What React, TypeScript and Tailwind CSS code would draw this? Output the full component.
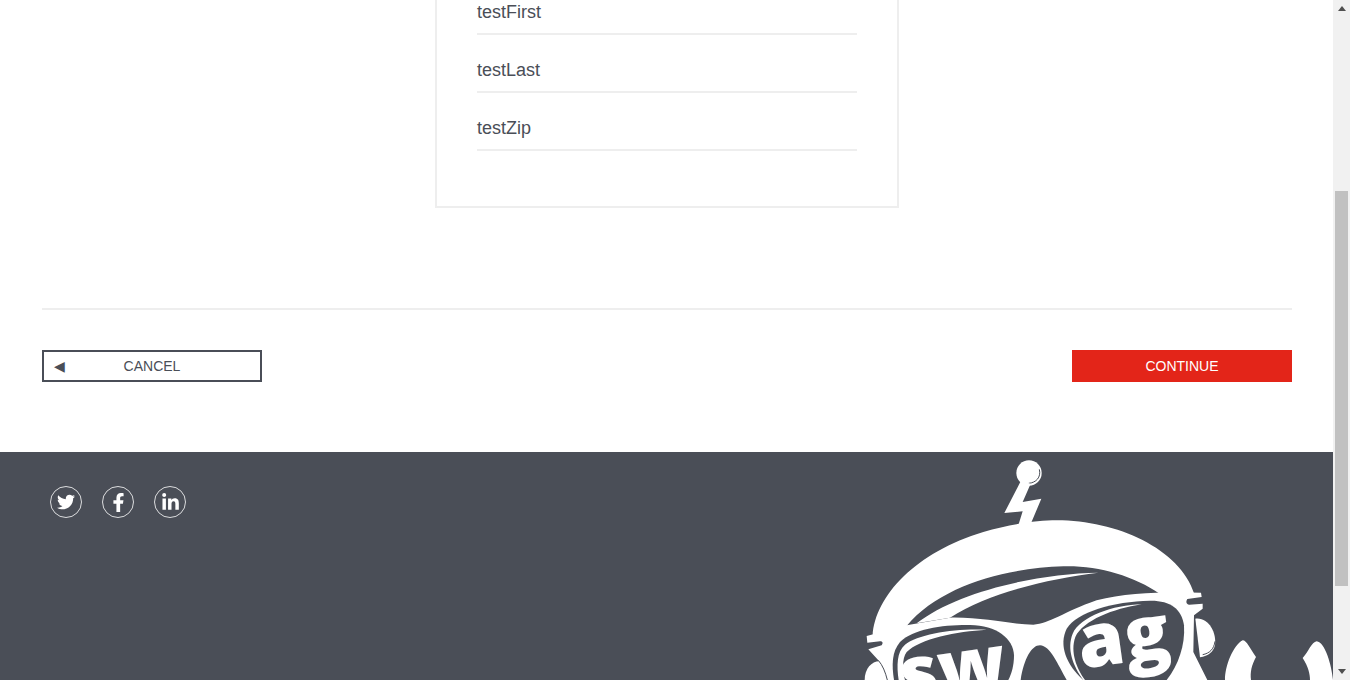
import { FaFacebookF, FaLinkedinIn, FaTwitter } from "react-icons/fa";

const rows = ["testFirst", "testLast", "testZip"];
const socials = [
  { key: "twitter", icon: <FaTwitter className="w-[18px] h-[18px]" /> },
  { key: "facebook", icon: <FaFacebookF className="w-[19px] h-[19px]" /> },
  { key: "linkedin", icon: <FaLinkedinIn className="w-[19px] h-[19px]" /> },
];

// Mascot, coordinates are 3x the footer pixels
function Mascot() {
  const dark = "#4a4e57";
  return (
    <svg viewBox="0 0 1449 684" className="w-[483px] h-[228px] shrink-0">
      {/* antenna */}
      <circle cx="537" cy="63" r="38" fill="#fff" />
      <path d="M568 52C574 76 558 92 536 94" fill="none" stroke={dark} strokeWidth="3" />
      <path d="M512 88L463 183L518 178L505 220L543 214L574 140L518 150L542 95Z" fill="#fff" />
      {/* dome */}
      <path d="M68 552C75 430 200 300 400 240C480 216 560 205 620 205C800 205 990 290 1033 426L930 426C850 370 740 340 640 343C470 348 270 400 170 522Z" fill="#fff" />
      <path d="M745 362C560 365 320 420 200 514L300 497C420 420 600 380 745 362Z" fill="#fff" />
      {/* ears and hands */}
      <path d="M1036 500C1075 495 1100 540 1095 580C1090 600 1075 612 1050 616Z" fill="#fff" />
      <path d="M1095 568C1092 592 1078 604 1058 608" fill="none" stroke={dark} strokeWidth="3" />
      <path d="M44 684C44 650 65 628 88 628L120 684Z" fill="#fff" />
      <path d="M1178 565C1190 565 1200 590 1218 615C1205 640 1200 660 1203 684L1125 684C1125 640 1150 580 1178 565Z" fill="#fff" />
      <path d="M1400 568C1385 570 1375 600 1358 618C1375 645 1380 665 1380 684L1449 684C1445 640 1425 570 1400 568Z" fill="#fff" />
      {/* glasses frame */}
      <path d="M50 552L170 520L300 497C400 495 480 517 550 518C600 515 640 480 740 445C830 420 950 420 1053 422L1055 435L1012 441C1006 450 1010 458 1018 458L1058 455L1058 470L1032 490L1030 600L1072 684L105 684L85 625L55 592L95 580C100 572 98 568 90 568L52 572Z" fill="#fff" />
      <path d="M85 625C98 640 106 660 112 684" fill="none" stroke={dark} strokeWidth="3" />
      <path d="M512 684C522 620 545 580 570 580C600 580 625 640 650 684Z" fill={dark} />
      {/* right lens */}
      <path d="M700 684C650 640 625 580 650 530C680 480 790 448 900 446C960 445 995 470 1002 520C1006 580 985 640 950 684Z" fill={dark} />
      <path d="M700 684C668 640 650 590 668 545C690 495 790 458 875 457C790 470 700 505 676 555C660 600 680 650 705 684Z" fill="#fff" />
      {/* left lens */}
      <path d="M132 684C125 640 125 600 150 570C190 530 280 518 360 519C440 520 490 560 492 610C492 640 485 665 475 684Z" fill={dark} />
      <path d="M146 684C140 640 140 600 165 578C205 545 320 528 410 533C320 538 210 560 170 600C155 620 158 660 165 684Z" fill="#fff" />
      {/* real text in the lenses */}
      <text x="694" y="650" transform="rotate(-8 694 650)" fill="#fff" className="font-['Open_Sans',sans-serif] font-extrabold text-[224px]">ag</text>
      <text x="160" y="748" transform="rotate(-8 160 748)" fill="#fff" className="font-['Open_Sans',sans-serif] font-extrabold text-[224px]">sw</text>
    </svg>
  );
}

function Scrollbar() {
  return (
    <div className="w-[17px] h-[680px] shrink-0 bg-[#f1f1f1] flex flex-col items-center">
      <div className="h-[17px] w-full flex items-center justify-center">
        <svg viewBox="0 0 8 5" className="w-2 h-[5px]"><path d="M4 0L8 5H0Z" fill="#505050" /></svg>
      </div>
      <div className="w-[13px] h-[395px] mt-[174px] bg-[#c1c1c1]" />
      <div className="h-[17px] w-full flex items-center justify-center mt-[77px]">
        <svg viewBox="0 0 8 5" className="w-2 h-[5px]"><path d="M0 0H8L4 5Z" fill="#505050" /></svg>
      </div>
    </div>
  );
}

export default function App() {
  return (
    <div className="flex h-[680px] w-[1350px] overflow-hidden bg-white font-['Liberation_Sans',Arial,sans-serif] text-[#4a4e57]">
      <div className="w-[1333px] shrink-0 flex flex-col">
        <div className="h-[452px] shrink-0 pl-[42px] pr-[41px]">
          <div className="h-[309px] flex justify-center">
            <div className="w-[464px] h-[208px] border-2 border-t-0 border-[#eeeeee] px-[40px]">
              {rows.map((r, i) => (
                <div
                  key={r}
                  className={`flex items-center border-b-2 border-[#eeeeee] text-[18px] ${i === 0 ? "h-[35px] pb-[9px]" : "h-[58px] pt-[24px] pb-[10px]"}`}
                >
                  {r}
                </div>
              ))}
            </div>
          </div>
          <div className="border-t-2 border-[#eeeeee] -mt-[1px] pt-[40px] flex justify-between">
            <button className="relative w-[220px] h-[32px] border-2 border-[#4a4e57] flex items-center justify-center text-[14px]">
              <span className="absolute left-[10px] text-[14px] leading-none">◀</span>
              CANCEL
            </button>
            <button className="w-[220px] h-[32px] bg-[#e32519] text-white text-[14px] flex items-center justify-center">
              CONTINUE
            </button>
          </div>
        </div>
        <footer className="h-[228px] shrink-0 bg-[#4a4e57] overflow-hidden flex justify-between pl-[50px]">
          <div className="flex gap-5 pt-[34px] text-white">
            {socials.map((s) => (
              <a key={s.key} className="w-8 h-8 rounded-full border border-white/80 flex items-center justify-center">
                {s.icon}
              </a>
            ))}
          </div>
          <Mascot />
        </footer>
      </div>
      <Scrollbar />
    </div>
  );
}
